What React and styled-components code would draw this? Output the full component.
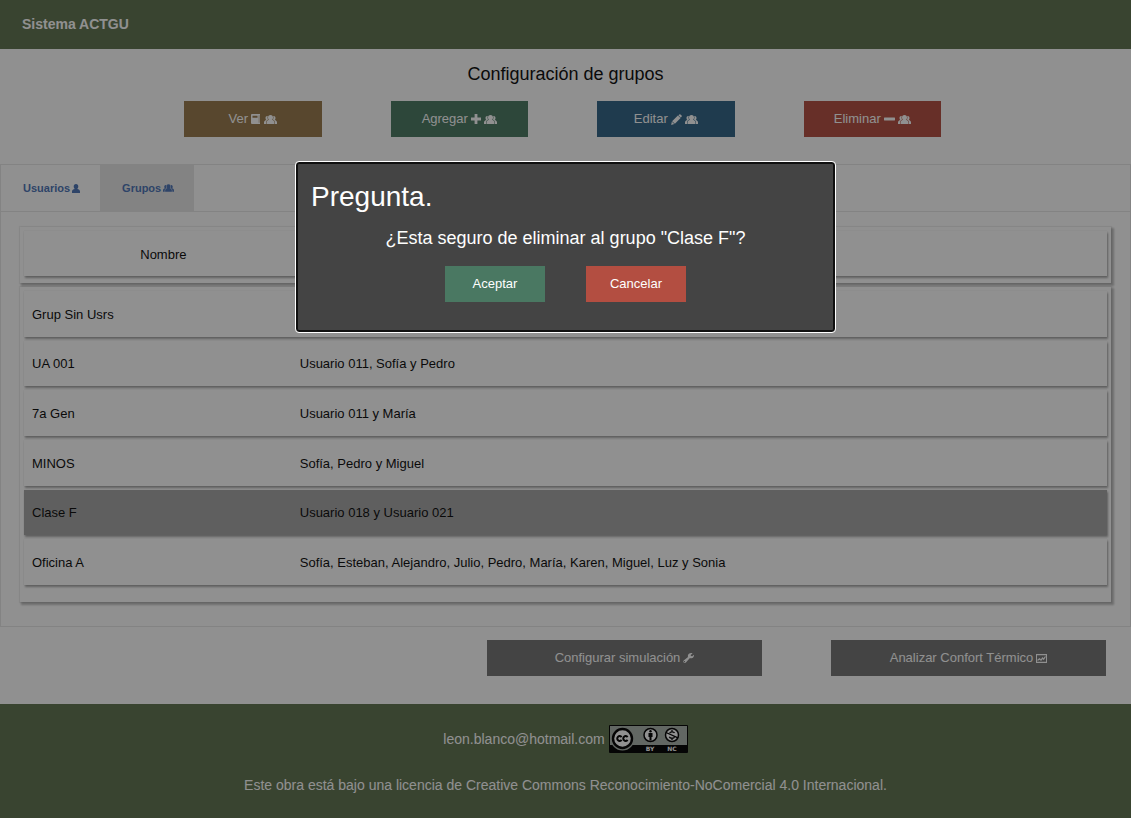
import React from "react";
import styled, { createGlobalStyle } from "styled-components";

const GlobalStyle = createGlobalStyle`
  *, *::before, *::after { box-sizing: border-box; }
  body {
    margin: 0;
    background: #fefefe;
    color: #0a0a0a;
    font-family: "Liberation Sans", Arial, Helvetica, sans-serif;
  }
`;

const Page = styled.div`
  display: flex;
  flex-direction: column;
  min-height: 100vh;
`;

const TopBar = styled.header`
  display: flex;
  align-items: center;
  height: 49px;
  padding: 0 22px 2px;
  background: #5f734f;
  color: #fefefe;
  font-size: 14px;
  font-weight: bold;
`;

const Title = styled.h1`
  margin: 0;
  padding-top: 13px;
  font-size: 18px;
  font-weight: normal;
  line-height: 24px;
  text-align: center;
`;

const Toolbar = styled.div`
  display: grid;
  grid-template-columns: repeat(4, 1fr);
  column-gap: 69px;
  padding: 15px 190px 27px 184px;
`;

const tones = {
  brown: "#98794b",
  green: "#4a7862",
  gray: "#737373",
  blue: "#306385",
  red: "#b34e41",
};

const Button = styled.button`
  display: flex;
  align-items: center;
  justify-content: center;
  gap: 3px;
  height: 36px;
  width: 100%;
  border: 0;
  padding: 0 8px;
  background: ${(p) => tones[p.$tone]};
  color: #fefefe;
  font-family: inherit;
  font-size: 13px;
  line-height: 16px;
`;

const TabBox = styled.section`
  border: 1px solid #e6e6e6;
`;

const TabList = styled.nav`
  display: flex;
  height: 47px;
  border-bottom: 1px solid #e6e6e6;
`;

const Tab = styled.a`
  display: flex;
  align-items: center;
  gap: 2px;
  padding: 0 20px 0 22px;
  background: ${(p) => (p.$active ? "#e6e6e6" : "transparent")};
  color: #4b73b5;
  font-size: 11px;
  font-weight: bold;
  text-decoration: none;
`;

const Table = styled.table`
  display: flex;
  flex-direction: column;
  gap: 4px;
  margin: 15px 19px 24px;
  font-size: 13px;
`;

const panelShadow = "2px 2px 2px 1px rgba(0, 0, 0, 0.26), 0 0 1px 1px rgba(0, 0, 0, 0.06)";

const TableHead = styled.thead`
  display: block;
  padding: 4px 4px 7px;
  background: #fefefe;
  box-shadow: ${panelShadow};
`;

const TableBody = styled.tbody`
  display: grid;
  grid-auto-rows: 1fr;
  gap: 4px;
  height: 315px;
  padding: 4px 4px 17px;
  background: #fefefe;
  box-shadow: ${panelShadow};
`;

const Row = styled.tr`
  display: grid;
  grid-template-columns: 1fr 3fr;
  align-items: center;
  min-height: 45px;
  padding-top: 1px;
  background: ${(p) => (p.$selected ? "#a5a5a5" : "#fefefe")};
  box-shadow: 1px 2px 2px 0 rgba(0, 0, 0, 0.34), 0 0 1px 0 rgba(0, 0, 0, 0.15);
`;

const HeadCell = styled.th`
  padding: 0 0 0 8px;
  font-weight: normal;
  text-align: center;
`;

const Cell = styled.td`
  padding: 0 0 0 ${(p) => (p.$second ? 5 : 8)}px;
`;

const Actions = styled.div`
  display: grid;
  grid-template-columns: 275px 275px;
  justify-content: end;
  column-gap: 69px;
  padding: 13px 25px 28px;
`;

const Footer = styled.footer`
  flex: 1;
  padding: 21px 16px 24px;
  background: #5f734f;
  color: #fefefe;
  font-size: 14px;
  text-align: center;
`;

const Contact = styled.div`
  display: flex;
  align-items: center;
  justify-content: center;
  gap: 4px;
  height: 28px;
`;

const License = styled.p`
  margin: 24px 0 0;
  line-height: 16px;
`;

const Overlay = styled.div`
  position: fixed;
  inset: 0;
  display: flex;
  align-items: flex-start;
  justify-content: center;
  padding-top: 162px;
  background: rgba(10, 10, 10, 0.45);
`;

const Dialog = styled.div`
  width: 539px;
  max-width: 92%;
  border: 2px solid #101010;
  border-radius: 3px;
  outline: 1px solid #ffffff;
  padding: 15px 13px 28px;
  background: #444444;
  color: #fefefe;
`;

const DialogTitle = styled.h2`
  margin: 0;
  font-size: 28px;
  font-weight: normal;
  line-height: 36px;
`;

const DialogText = styled.p`
  margin: 11px 0 16px;
  font-size: 18px;
  line-height: 24px;
  text-align: center;
`;

const DialogActions = styled.div`
  display: grid;
  grid-template-columns: 100px 100px;
  justify-content: center;
  column-gap: 41px;
`;

const Glyph = styled.svg`
  display: block;
  flex: none;
  fill: currentColor;
`;

const PersonIcon = () => (
  <Glyph width="8" height="9" viewBox="0 0 8 9">
    <path d="M4 0C5.500 0 6.300 1 6.300 2.500 6.300 3.600 5.800 4.500 5.200 5c1.500.3 2.800 1 2.800 2.600V9H0V7.600C0 6 1.300 5.300 2.800 5 2.200 4.500 1.700 3.600 1.700 2.500 1.700 1 2.500 0 4 0z" />
  </Glyph>
);

const PeopleIcon = ({ width = 13, height = 9 }) => (
  <Glyph width={width} height={height} viewBox="0 0 13 9">
    <path d="M6.500 0C8.200 0 9 1 9 2.400 9 3.500 8.500 4.300 8 4.800c1.500.4 2.500 1.200 2.500 2.800V9h-8V7.600c0-1.600 1-2.400 2.500-2.800C4.500 4.300 4 3.500 4 2.400 4 1 4.800 0 6.500 0z" />
    <path d="M3.800 1C2.500.6 1.500 1.600 1.500 2.900c0 .9.300 1.500.8 2C1 5.300 0 6 0 7.400V9h2V7.600c0-1.500.8-2.500 2.200-3.100C3.400 3.500 3.300 2.200 3.800 1zM9.200 1c1.300-.4 2.300.6 2.300 1.900 0 .9-.3 1.500-.8 2 1.300.4 2.300 1.100 2.300 2.500V9h-2V7.600c0-1.500-.8-2.500-2.200-3.100.8-1 .9-2.300.4-3.500z" />
  </Glyph>
);

const BookIcon = () => (
  <Glyph width="10" height="10" viewBox="0 0 10 10">
    <path fillRule="evenodd" d="M1 0h8v10H1Q0 10 0 9V1Q0 0 1 0zM1.500 1.700v2h5v-2zM7.800 1.200h.5V8.800h-.5z" />
  </Glyph>
);

const PlusIcon = () => (
  <Glyph width="10" height="10" viewBox="0 0 10 10">
    <path d="M3.600 0h2.800v3.600H10v2.800H6.400V10H3.600V6.400H0V3.600h3.600z" />
  </Glyph>
);

const MinusIcon = () => (
  <Glyph width="11" height="10" viewBox="0 0 11 10">
    <rect y="3.500" width="11" height="3" rx=".4" />
  </Glyph>
);

const PencilIcon = () => (
  <Glyph width="11" height="11" viewBox="0 0 11 11">
    <path d="M8.300.4a1 1 0 0 1 1.200 0l1.100 1.100a1 1 0 0 1 0 1.200l-.8.9-2.400-2.300zM6.900 1.500l2.700 2.600-5.700 5.700-2.800-2.600zM.8 7.700l2.500 2.400-3.100.8z" />
  </Glyph>
);

const WrenchIcon = () => (
  <Glyph width="11" height="10" viewBox="0 0 11 10">
    <path fillRule="evenodd" d="M9.600.3 7.700 1.900l.2 1.100 1.300.3L11 1.800c.1 1.500-.5 2.700-1.700 3.200-.9.400-1.700.3-2.400.1L2.900 9.500c-.6.600-1.600.6-2.200.1-.6-.6-.6-1.600 0-2.200L5 4C4.700 3 4.800 2 5.600 1.100 6.700.1 8.200-.2 9.600.3zM1.700 8a.6.6 0 1 0 .1 1.100A.6.6 0 0 0 1.700 8z" />
  </Glyph>
);

const ChartIcon = () => (
  <Glyph width="11" height="9" viewBox="0 0 11 9">
    <path fillRule="evenodd" d="M0 0h11v9H0zM1 1.200v6.600h9V1.200z" />
    <path d="M1.500 7V5.500l2.100-1.600 1.300 1.300L6.500 3.100l1 1.200L9.500 1.600v2L7.700 6.300l-1-1.200-1.600 2-1.500-1.400z" />
  </Glyph>
);

const Badge = () => (
  <Glyph width="79" height="28" viewBox="0 0 79 28" role="img" aria-label="Creative Commons BY-NC">
    <rect width="79" height="28" rx="1" fill="#000" />
    <rect x="1" y="1" width="77" height="19" fill="#aab2ab" />
    <circle cx="13.500" cy="13.500" r="12" fill="#aab2ab" />
    <circle cx="13.500" cy="13.500" r="9.500" fill="#fff" stroke="#000" strokeWidth="2.400" />
    <g fill="none" stroke="#000" strokeWidth="2">
      <path d="M12.600 12.100a2.400 2.400 0 1 0 0 2.800M18.600 12.100a2.400 2.400 0 1 0 0 2.800" />
    </g>
    <circle cx="41.500" cy="10" r="6.500" fill="#fff" stroke="#000" strokeWidth="1.500" />
    <circle cx="41.500" cy="6.300" r="1.200" fill="#000" />
    <path fill="#000" d="M39.500 8h4v4h-1v3.500h-2V12h-1z" />
    <circle cx="63" cy="10" r="6.500" fill="#fff" stroke="#000" strokeWidth="1.500" />
    <path fill="none" stroke="#000" strokeWidth="1.300" d="M57 7.500l12 5.300M65.500 8c-.6-1.500-4.300-1.700-4.800.2M60.300 11.800c.7 1.900 4.700 2 5.200 0M63 5v1.500M63 13.500V15" />
    <text x="41" y="26" fill="#fff" textAnchor="middle" fontFamily="DejaVu Sans, sans-serif" fontSize="6" fontWeight="bold">BY</text>
    <text x="63" y="26" fill="#fff" textAnchor="middle" fontFamily="DejaVu Sans, sans-serif" fontSize="6" fontWeight="bold">NC</text>
  </Glyph>
);

const groups = [
  ["Grup Sin Usrs", ""],
  ["UA 001", "Usuario 011, Sofía y Pedro"],
  ["7a Gen", "Usuario 011 y María"],
  ["MINOS", "Sofía, Pedro y Miguel"],
  ["Clase F", "Usuario 018 y Usuario 021"],
  ["Oficina A", "Sofía, Esteban, Alejandro, Julio, Pedro, María, Karen, Miguel, Luz y Sonia"],
];

export default function App() {
  return (
    <>
      <GlobalStyle />
      <Page>
        <TopBar>Sistema ACTGU</TopBar>
        <main>
          <Title>Configuración de grupos</Title>
          <Toolbar>
            <Button $tone="brown">Ver <BookIcon /><PeopleIcon /></Button>
            <Button $tone="green">Agregar <PlusIcon /><PeopleIcon /></Button>
            <Button $tone="blue">Editar <PencilIcon /><PeopleIcon /></Button>
            <Button $tone="red">Eliminar <MinusIcon /><PeopleIcon /></Button>
          </Toolbar>
          <TabBox>
            <TabList>
              <Tab href="#usuarios">Usuarios <PersonIcon /></Tab>
              <Tab href="#grupos" $active>Grupos <PeopleIcon width={11} height={8} /></Tab>
            </TabList>
            <Table>
              <TableHead>
                <Row>
                  <HeadCell scope="col">Nombre</HeadCell>
                  <HeadCell scope="col">Usuarios</HeadCell>
                </Row>
              </TableHead>
              <TableBody>
                {groups.map(([name, users]) => (
                  <Row key={name} $selected={name === "Clase F"}>
                    <Cell>{name}</Cell>
                    <Cell $second>{users}</Cell>
                  </Row>
                ))}
              </TableBody>
            </Table>
          </TabBox>
          <Actions>
            <Button $tone="gray">Configurar simulación <WrenchIcon /></Button>
            <Button $tone="gray">Analizar Confort Térmico <ChartIcon /></Button>
          </Actions>
        </main>
        <Footer>
          <Contact>leon.blanco@hotmail.com <Badge /></Contact>
          <License>
            Este obra está bajo una licencia de Creative Commons Reconocimiento-NoComercial 4.0 Internacional.
          </License>
        </Footer>
      </Page>
      <Overlay>
        <Dialog role="dialog" aria-modal="true" aria-labelledby="dialog-title">
          <DialogTitle id="dialog-title">Pregunta.</DialogTitle>
          <DialogText>¿Esta seguro de eliminar al grupo "Clase F"?</DialogText>
          <DialogActions>
            <Button $tone="green">Aceptar</Button>
            <Button $tone="red">Cancelar</Button>
          </DialogActions>
        </Dialog>
      </Overlay>
    </>
  );
}
